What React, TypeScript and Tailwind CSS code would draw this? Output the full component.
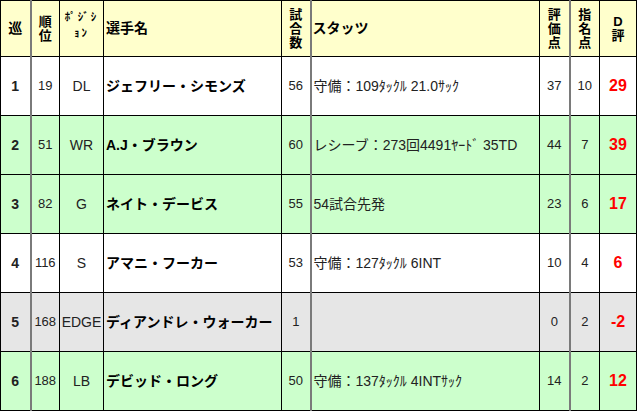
const rows = [
  { no: "1", rank: "19", pos: "DL", name: "ジェフリー・シモンズ", games: "56", stats: "守備：109ﾀｯｸﾙ 21.0ｻｯｸ", score: "37", pick: "10", d: "29", bg: "bg-white" },
  { no: "2", rank: "51", pos: "WR", name: "A.J・ブラウン", games: "60", stats: "レシーブ：273回4491ﾔｰﾄﾞ 35TD", score: "44", pick: "7", d: "39", bg: "bg-[#ccffcc]" },
  { no: "3", rank: "82", pos: "G", name: "ネイト・デービス", games: "55", stats: "54試合先発", score: "23", pick: "6", d: "17", bg: "bg-[#ccffcc]" },
  { no: "4", rank: "116", pos: "S", name: "アマニ・フーカー", games: "53", stats: "守備：127ﾀｯｸﾙ 6INT", score: "10", pick: "4", d: "6", bg: "bg-white" },
  { no: "5", rank: "168", pos: "EDGE", name: "ディアンドレ・ウォーカー", games: "1", stats: "", score: "0", pick: "2", d: "-2", bg: "bg-[#e6e6e6]" },
  { no: "6", rank: "188", pos: "LB", name: "デビッド・ロング", games: "50", stats: "守備：137ﾀｯｸﾙ 4INTｻｯｸ", score: "14", pick: "2", d: "12", bg: "bg-[#ccffcc]" },
];

const font = "font-['Liberation_Sans','Noto_Sans_CJK_JP',sans-serif]";

function Stack({ chars }: { chars: string[] }) {
  return (
    <div className="flex flex-col items-center text-[13px] leading-[14px]">
      {chars.map((c, i) => (
        <span key={i} className="block h-[14px]">{c}</span>
      ))}
    </div>
  );
}

export default function App() {
  return (
    <div className={`w-[640px] h-[416px] bg-white ${font} text-[#222]`}>
      <table className="table-fixed border-collapse w-[636px]">
        <colgroup>
          <col className="w-[30px]" />
          <col className="w-[29px]" />
          <col className="w-[44px]" />
          <col className="w-[178px]" />
          <col className="w-[29px]" />
          <col className="w-[229px]" />
          <col className="w-[30px]" />
          <col className="w-[30px]" />
          <col className="w-[37px]" />
        </colgroup>
        <thead>
          <tr className="h-[56px] bg-[#ffffcc] text-[14px] font-bold text-black">
            <th className="border border-black border-r-2 border-r-[#7a7a7a] text-center">巡</th>
            <th className="border border-black align-middle">
              <Stack chars={["順", "位"]} />
            </th>
            <th className="border border-black align-top pt-[8px] text-[11px] leading-[16px] tracking-[2px] font-bold">
              <div>ﾎﾟｼﾞｼ</div>
              <div>ｮﾝ</div>
            </th>
            <th className="border border-black text-left pl-[2px]">選手名</th>
            <th className="border border-black border-r-2 border-r-[#7a7a7a]">
              <Stack chars={["試", "合", "数"]} />
            </th>
            <th className="border border-black text-left pl-[1px]">スタッツ</th>
            <th className="border border-black border-r-2 border-r-[#7a7a7a]">
              <Stack chars={["評", "価", "点"]} />
            </th>
            <th className="border border-black">
              <Stack chars={["指", "名", "点"]} />
            </th>
            <th className="border border-black">
              <Stack chars={["D", "評"]} />
            </th>
          </tr>
        </thead>
        <tbody>
          {rows.map((r) => (
            <tr key={r.no} className={`h-[59px] ${r.bg}`}>
              <td className="border border-black border-r-2 border-r-[#7a7a7a] text-center text-[14px] font-bold">{r.no}</td>
              <td className="border border-black text-center text-[13px]">{r.rank}</td>
              <td className="border border-black text-center text-[14px]">{r.pos}</td>
              <td className="border border-black pl-[2px] text-[14px] font-bold text-black whitespace-nowrap">{r.name}</td>
              <td className="border border-black border-r-2 border-r-[#7a7a7a] text-center text-[13px]">{r.games}</td>
              <td className="border border-black pl-[2px] text-[14px] whitespace-nowrap">{r.stats}</td>
              <td className="border border-black border-r-2 border-r-[#7a7a7a] text-center text-[13px]">{r.score}</td>
              <td className="border border-black text-center text-[13px]">{r.pick}</td>
              <td className="border border-black text-center text-[16px] font-bold text-[#ff0000]">{r.d}</td>
            </tr>
          ))}
        </tbody>
      </table>
    </div>
  );
}
